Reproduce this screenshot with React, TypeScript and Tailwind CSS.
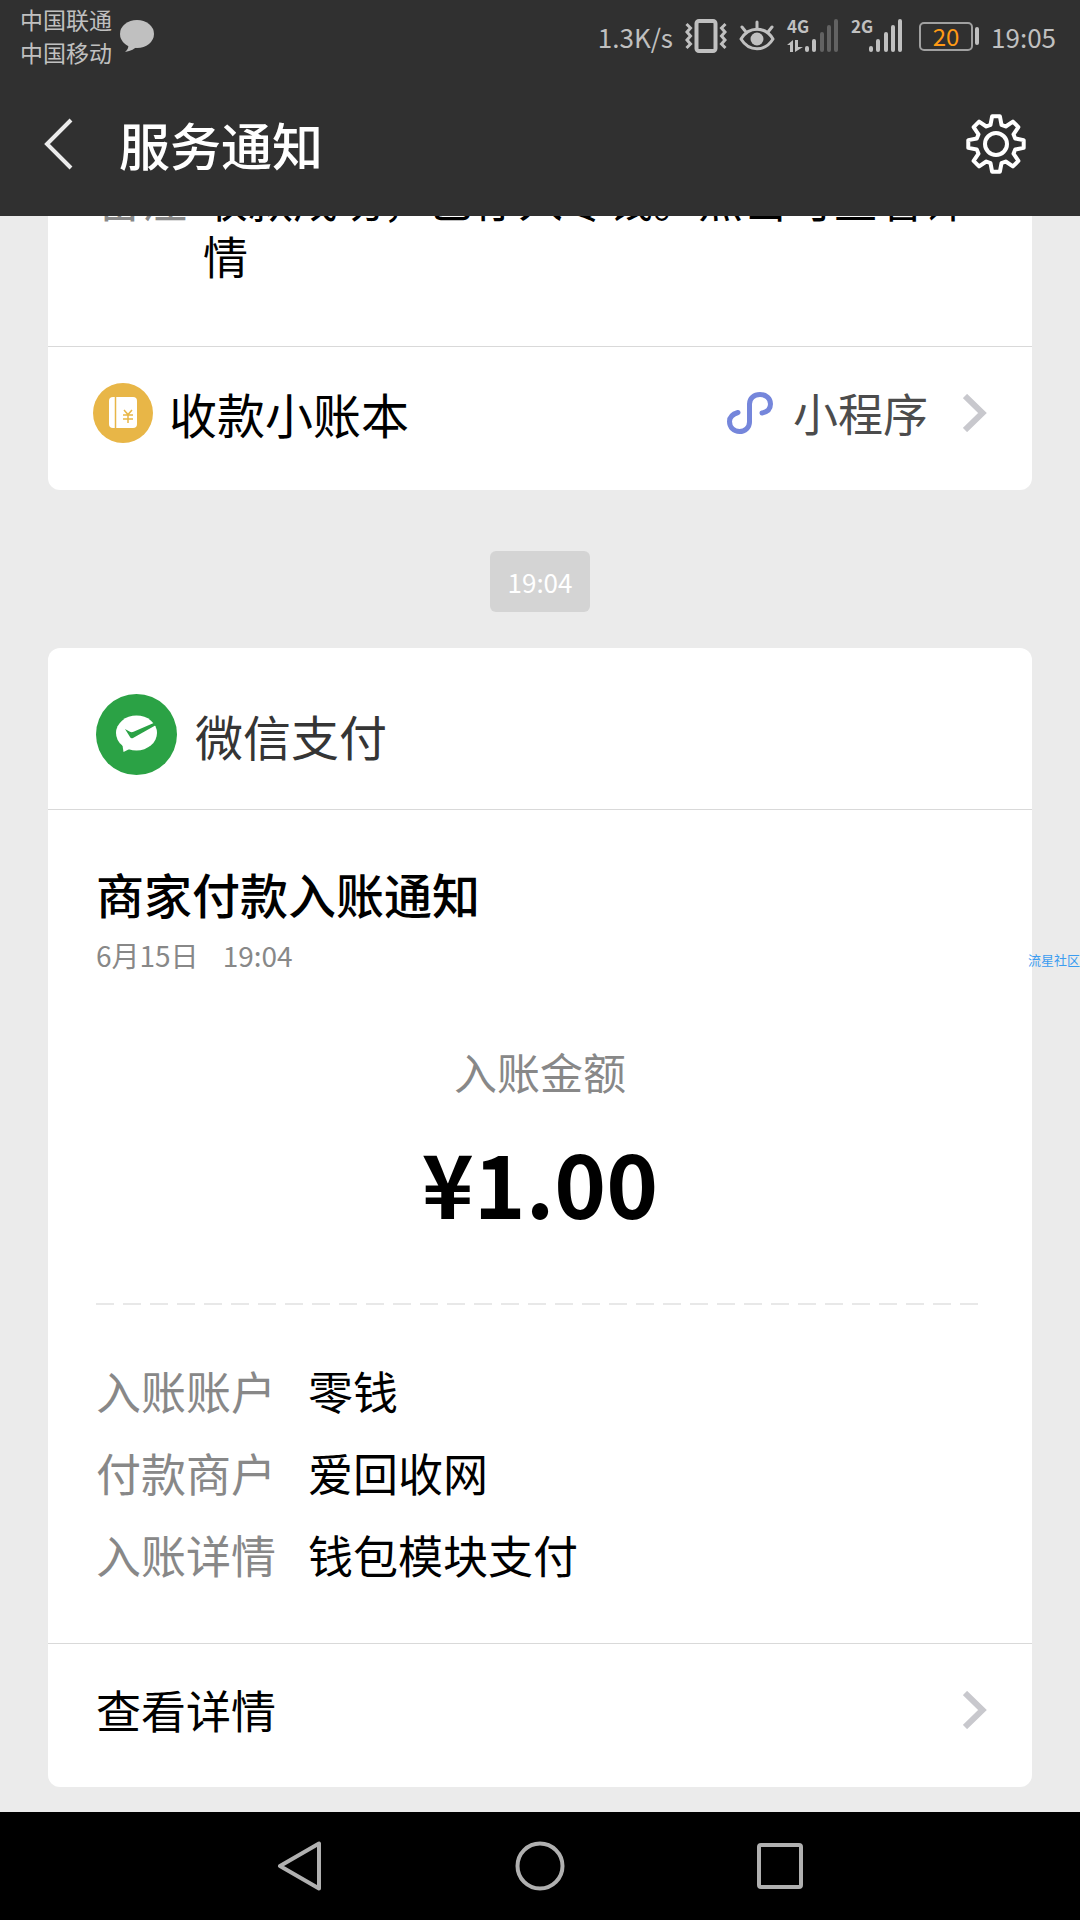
import type { ReactNode } from "react";

type IconProps = { className?: string };

function BubbleIcon({ className }: IconProps) {
  return (
    <svg viewBox="0 0 34 33" fill="currentColor" className={className} aria-hidden="true">
      <ellipse cx="17" cy="14" rx="17" ry="14" />
      <path d="M8 23C9 27 8 29 5 32c6-1 10-3 12-6z" />
    </svg>
  );
}

function VibrateIcon({ className }: IconProps) {
  return (
    <svg viewBox="0 0 42 34" fill="none" stroke="currentColor" className={className} aria-hidden="true">
      <rect x="11.5" y="2" width="19" height="30" rx="2.5" strokeWidth="4" />
      <path
        d="M1.5 5l4 4-3.500 4 3.500 4-3.500 4 3.500 4-4 4M40.500 5l-4 4 3.500 4-3.500 4 3.500 4-3.500 4 4 4"
        strokeWidth="3"
      />
    </svg>
  );
}

function EyeIcon({ className }: IconProps) {
  return (
    <svg viewBox="0 0 36 34" fill="none" stroke="currentColor" strokeLinecap="round" className={className} aria-hidden="true">
      <path d="M2 20C10 7 26 7 34 20C26 33 10 33 2 20z" strokeWidth="3" strokeLinejoin="round" />
      <circle cx="18" cy="20" r="6.500" fill="currentColor" stroke="none" />
      <path d="M18 10V3M7 13L3 8M29 13l4-5" strokeWidth="3" />
    </svg>
  );
}

const BARS = [
  { x: 18, h: 6 },
  { x: 25, h: 13 },
  { x: 33, h: 20 },
  { x: 40, h: 27 },
  { x: 47, h: 33 },
];

function SignalIcon({ label, level, data }: { label: string; level: number; data?: boolean }) {
  return (
    <svg viewBox="0 0 52 34" className="h-[34px] w-[52px] overflow-visible" fill="currentColor">
      <text x="0" y="14" className="text-[17px] font-bold">
        {label}
      </text>
      {BARS.map((bar, i) => (
        <rect
          key={bar.x}
          x={bar.x}
          y={33 - bar.h}
          width="4"
          height={bar.h}
          rx="2"
          className={i < level ? "" : "opacity-35"}
        />
      ))}
      {data && <path d="M0 26l6-5v12H3v-7zM8 21h3v7h5l-8 5z" />}
    </svg>
  );
}

// Eight-tooth outline, four points per tooth.
const GEAR_POINTS = Array.from({ length: 8 }, (_, i) =>
  [
    [20, -16],
    [28, -8],
    [28, 8],
    [20, 16],
  ].map(([r, deg]) => {
    const a = ((i * 45 + deg) * Math.PI) / 180;
    return `${(r * Math.sin(a)).toFixed(1)},${(-r * Math.cos(a)).toFixed(1)}`;
  })
)
  .flat()
  .join(" ");

function GearIcon({ className }: IconProps) {
  return (
    <svg viewBox="-30 -30 60 60" fill="none" stroke="currentColor" strokeWidth="4" strokeLinejoin="round" className={className} aria-hidden="true">
      <polygon points={GEAR_POINTS} />
      <circle r="11" />
    </svg>
  );
}

function LedgerIcon({ className }: IconProps) {
  return (
    <svg viewBox="0 0 60 60" className={className} aria-hidden="true">
      <circle cx="30" cy="30" r="30" fill="#e8b647" />
      <rect x="16" y="14" width="28" height="31" rx="4" fill="#fff" />
      <path d="M22.500 14v31" stroke="#e8b647" strokeWidth="1.500" />
      <path d="M31 27l4 4.500 4-4.500M35 31.500V40M30 32h10M30 36h10" fill="none" stroke="#e8b647" strokeWidth="1.500" />
    </svg>
  );
}

function MiniProgramIcon({ className }: IconProps) {
  return (
    <svg viewBox="0 0 46 42" fill="none" stroke="currentColor" strokeWidth="5" strokeLinecap="round" className={className} aria-hidden="true">
      <path d="M11 20.500C6 22 2.500 25 2.500 29.500C2.500 35.500 7 39.500 12.500 39.500C18 39.500 22.500 35.500 22.500 30V12C22.500 6.500 27 2.500 33 2.500C39 2.500 43.500 6.500 43.500 12C43.500 17 40 20 35 21" />
    </svg>
  );
}

function WechatPayIcon({ className }: IconProps) {
  return (
    <svg viewBox="0 0 81 81" className={className} aria-hidden="true">
      <circle cx="40.500" cy="40.500" r="40.500" fill="#2ba245" />
      <ellipse cx="40.500" cy="39" rx="20.500" ry="17.500" fill="#fff" />
      <path d="M26 48l1.500 10 8-4z" fill="#fff" />
      <path d="M29 35l4.500 2.500q2 1.200 4 .2L60 28l1 2.500-24 13.500q-2 1-3-1z" fill="#2ba245" />
    </svg>
  );
}

function Chevron() {
  return (
    <svg viewBox="0 0 24 38" fill="none" stroke="#c8c8cd" strokeWidth="6" className="h-[38px] w-6 shrink-0" aria-hidden="true">
      <path d="M2 2l17.500 17L2 36" />
    </svg>
  );
}

function StatusBar() {
  return (
    <div className="flex h-[72px] items-center pl-5 pr-6 text-[#c0c0c0]">
      <div className="text-[23px] leading-[33px]">
        <div>中国联通</div>
        <div>中国移动</div>
      </div>
      <BubbleIcon className="ml-2 h-[33px] w-[34px]" />
      <div className="ml-auto flex items-center gap-3">
        <span className="text-[26px]">1.3K/s</span>
        <VibrateIcon className="h-[34px] w-[42px]" />
        <EyeIcon className="h-[34px] w-9" />
        <SignalIcon label="4G" level={2} data />
        <SignalIcon label="2G" level={5} />
        <div className="flex items-center gap-[2px] pl-1">
          <div className="flex h-[29px] w-[54px] items-center justify-center rounded-[5px] border-2 border-[#a0a0a0] text-2xl text-[#ff9a15]">
            20
          </div>
          <div className="h-[18px] w-1 rounded-sm bg-[#c0c0c0]" />
        </div>
        <span className="text-[26px]">19:05</span>
      </div>
    </div>
  );
}

function Header() {
  return (
    <header className="relative z-10 shrink-0 bg-[#303030]">
      <StatusBar />
      <div className="flex h-36 items-center pl-[43px] pr-[54px] text-white">
        <button type="button" aria-label="返回">
          <svg viewBox="0 0 30 52" fill="none" stroke="#ebebeb" strokeWidth="4" className="h-[52px] w-[30px]">
            <path d="M28 2L4 26l24 24" />
          </svg>
        </button>
        <h1 className="ml-[46px] text-[51px] font-medium leading-[60px]">服务通知</h1>
        <button type="button" aria-label="设置" className="ml-auto">
          <GearIcon className="h-[60px] w-[60px]" />
        </button>
      </div>
    </header>
  );
}

function Card({ children }: { children: ReactNode }) {
  return <section className="shrink-0 overflow-hidden rounded-xl bg-white">{children}</section>;
}

const DETAILS = [
  { label: "入账账户", value: "零钱" },
  { label: "付款商户", value: "爱回收网" },
  { label: "入账详情", value: "钱包模块支付" },
];

function LedgerCard() {
  return (
    <Card>
      <div className="flex gap-4 pb-[62px] pl-[49px] pr-12 text-[45px] leading-[57px]">
        <span className="shrink-0 text-[#888]">备注</span>
        <p>收款成功，已存入零钱。点击可查看详情</p>
      </div>
      <a href="#ledger" className="flex items-center border-t border-[#d9d9d9] pb-[47px] pl-[45px] pr-[45px] pt-9">
        <LedgerIcon className="h-[60px] w-[60px]" />
        <span className="ml-4 text-[48px] leading-[60px]">收款小账本</span>
        <MiniProgramIcon className="ml-auto h-[42px] w-[46px] text-[#7586db]" />
        <span className="ml-5 mr-[35px] text-[45px] leading-[60px] text-[#4c4c4c]">小程序</span>
        <Chevron />
      </a>
    </Card>
  );
}

function PaymentCard() {
  return (
    <Card>
      <div className="flex items-center border-b border-[#d9d9d9] pb-[34px] pl-12 pt-[46px]">
        <WechatPayIcon className="h-[81px] w-[81px]" />
        <span className="ml-[18px] text-[48px] leading-[60px] text-[#353535]">微信支付</span>
      </div>
      <div className="px-12 pb-[47px] pt-[53px]">
        <h2 className="text-[48px] font-medium leading-[60px]">商家付款入账通知</h2>
        <div className="mt-2 flex gap-6 text-[28px] leading-[48px] text-[#888]">
          <span>6月15日</span>
          <span>19:04</span>
        </div>
        <div className="mt-[62px] text-center text-[43px] leading-[60px] text-[#888]">入账金额</div>
        <div className="mt-5 text-center text-[88px] font-bold leading-[120px]">¥1.00</div>
        <div className="mt-[62px] h-[2px] bg-[repeating-linear-gradient(to_right,#e8e8e8_0_18px,transparent_18px_27px)]" />
        <dl className="mt-[45px] grid grid-cols-[auto_1fr] gap-x-8 text-[45px] leading-[82px]">
          {DETAILS.map((row) => (
            <div key={row.label} className="contents">
              <dt className="text-[#888]">{row.label}</dt>
              <dd>{row.value}</dd>
            </div>
          ))}
        </dl>
      </div>
      <a href="#detail" className="flex items-center justify-between border-t border-[#d9d9d9] pb-[47px] pl-12 pr-[45px] pt-9">
        <span className="text-[45px] leading-[60px]">查看详情</span>
        <Chevron />
      </a>
    </Card>
  );
}

function NavBar() {
  return (
    <nav className="flex h-[108px] shrink-0 items-center justify-center gap-[190px] bg-black text-[#b0b0b0]">
      <button type="button" aria-label="后退">
        <svg viewBox="0 0 50 50" fill="none" stroke="currentColor" strokeWidth="4" strokeLinejoin="round" className="h-[50px] w-[50px]">
          <path d="M44 2.500v45L5 25z" />
        </svg>
      </button>
      <button type="button" aria-label="主屏幕">
        <svg viewBox="0 0 50 50" fill="none" stroke="currentColor" strokeWidth="4" className="h-[50px] w-[50px]">
          <circle cx="25" cy="25" r="22.500" />
        </svg>
      </button>
      <button type="button" aria-label="最近任务">
        <svg viewBox="0 0 50 50" fill="none" stroke="currentColor" strokeWidth="4" className="h-[50px] w-[50px]">
          <rect x="4" y="4" width="42" height="42" rx="2" />
        </svg>
      </button>
    </nav>
  );
}

export default function App() {
  return (
    <div className="relative flex h-screen flex-col overflow-hidden bg-[#ebebeb] font-['Noto_Sans_CJK_SC',sans-serif] text-black">
      <Header />
      {/* Messages stay pinned to the newest one; older ones slide under the header. */}
      <main className="flex min-h-0 flex-1 flex-col justify-end overflow-hidden px-12 pb-[25px]">
        <LedgerCard />
        <time className="mb-9 mt-[61px] self-center rounded-md bg-[#d4d4d4] px-[18px] text-[26px] leading-[61px] text-white">
          19:04
        </time>
        <PaymentCard />
      </main>
      <NavBar />
      <span className="absolute right-0 top-[950px] text-[13px] leading-5 text-[#3b9cf0]">流星社区</span>
    </div>
  );
}
